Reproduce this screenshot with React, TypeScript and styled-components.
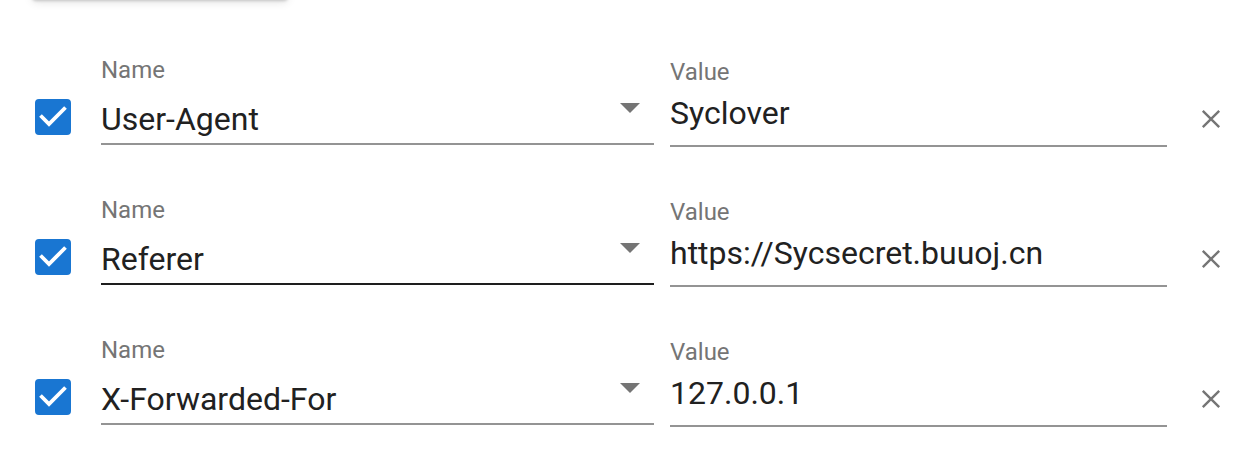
import React, { useState } from "react";
import styled, { createGlobalStyle } from "styled-components";

const GlobalStyle = createGlobalStyle`
  *, *::before, *::after { box-sizing: border-box; }
  body {
    margin: 0;
    background: #fff;
    color: #212121;
    font-family: Roboto, "Liberation Sans", sans-serif;
    overflow-x: hidden;
  }
`;

const Page = styled.main`
  padding: 0 32px 0 35px;
`;

const CardEdge = styled.div`
  width: 256px;
  height: 8px;
  margin: -8px 0 0 -3px;
  border-radius: 8px;
  background: #fff;
  box-shadow: 0 1px 3px rgba(0, 0, 0, 0.18), 0 2px 10px rgba(0, 0, 0, 0.12);
`;

const HeaderList = styled.form`
  display: flex;
  flex-direction: column;
  gap: 36px;
  padding: 54px 0 24px;
`;

const Row = styled.div`
  display: flex;
  align-items: flex-start;
  height: 104px;
`;

const CheckLabel = styled.label`
  display: grid;
  flex: none;
  width: 36px;
  height: 36px;
  margin: 45px 30px 0 0;
  cursor: pointer;

  > * { grid-area: 1 / 1; }
`;

const CheckInput = styled.input`
  appearance: none;
  width: 36px;
  height: 36px;
  margin: 0;
  border: 4px solid #757575;
  border-radius: 4px;
  cursor: pointer;

  &:checked { background: #1976d2; border-color: #1976d2; }
  & + svg { visibility: hidden; pointer-events: none; }
  &:checked + svg { visibility: visible; }
`;

const Field = styled.div<{ $grow: number; $gap?: number }>`
  position: relative;
  display: flex;
  flex-direction: column;
  flex: ${(p) => p.$grow} 1 0;
  min-width: 0;
  margin-right: ${(p) => p.$gap ?? 0}px;
`;

const FieldLabel = styled.label<{ $top: number }>`
  margin-top: ${(p) => p.$top}px;
  color: #757575;
  font-size: 24px;
  line-height: 32px;
`;

const NameSelect = styled.select<{ $active: boolean }>`
  appearance: none;
  width: 100%;
  height: 59px;
  padding: 8px 48px 0 0;
  border: 0;
  border-bottom: 2px solid ${(p) => (p.$active ? "#1e1e1e" : "#949494")};
  border-radius: 0;
  outline: 0;
  background: transparent;
  color: inherit;
  font: 400 32px/40px Roboto, "Liberation Sans", sans-serif;
`;

const Caret = styled.svg`
  position: absolute;
  right: 14px;
  bottom: 32px;
  width: 20px;
  height: 10px;
  fill: #757575;
  pointer-events: none;
`;

const ValueInput = styled.input`
  width: 100%;
  height: 59px;
  padding: 0 0 7px;
  border: 0;
  border-bottom: 2px solid #949494;
  outline: 0;
  background: transparent;
  color: inherit;
  font: 400 32px/40px Roboto, "Liberation Sans", sans-serif;
`;

const RemoveButton = styled.button`
  display: grid;
  flex: none;
  place-items: center;
  width: 20px;
  height: 20px;
  margin: 55px 0 0 34px;
  padding: 0;
  border: 0;
  background: transparent;
  cursor: pointer;
`;

const names = ["User-Agent", "Referer", "X-Forwarded-For"];

const initial = [
  { name: "User-Agent", value: "Syclover", active: false },
  { name: "Referer", value: "https://Sycsecret.buuoj.cn", active: true },
  { name: "X-Forwarded-For", value: "127.0.0.1", active: false },
];

export default function App() {
  const [rows, setRows] = useState(initial);

  return (
    <>
      <GlobalStyle />
      <Page>
        <CardEdge />
        <HeaderList>
          {rows.map((row, i) => (
            <Row key={row.name}>
              <CheckLabel>
                <CheckInput type="checkbox" defaultChecked aria-label={`Enable ${row.name}`} />
                <svg width="36" height="36" viewBox="0 0 36 36" aria-hidden="true">
                  <path d="M5.5 16.5 14 25 30.5 8.5" fill="none" stroke="#fff" strokeWidth="3.8" />
                </svg>
              </CheckLabel>
              <Field $grow={553} $gap={16}>
                <FieldLabel $top={0} htmlFor={`name-${i}`}>Name</FieldLabel>
                <NameSelect id={`name-${i}`} defaultValue={row.name} $active={row.active}>
                  {names.map((n) => (
                    <option key={n}>{n}</option>
                  ))}
                </NameSelect>
                <Caret viewBox="0 0 20 10" aria-hidden="true">
                  <path d="M0 0h20L10 10z" />
                </Caret>
              </Field>
              <Field $grow={497}>
                <FieldLabel $top={2} htmlFor={`value-${i}`}>Value</FieldLabel>
                <ValueInput id={`value-${i}`} defaultValue={row.value} spellCheck={false} />
              </Field>
              <RemoveButton
                type="button"
                aria-label={`Remove ${row.name}`}
                onClick={() => setRows(rows.filter((r) => r !== row))}
              >
                <svg width="20" height="20" viewBox="0 0 20 20" aria-hidden="true">
                  <path d="M1.8 1.8 18.2 18.2M18.2 1.8 1.8 18.2" stroke="#757575" strokeWidth="2.4" />
                </svg>
              </RemoveButton>
            </Row>
          ))}
        </HeaderList>
      </Page>
    </>
  );
}
